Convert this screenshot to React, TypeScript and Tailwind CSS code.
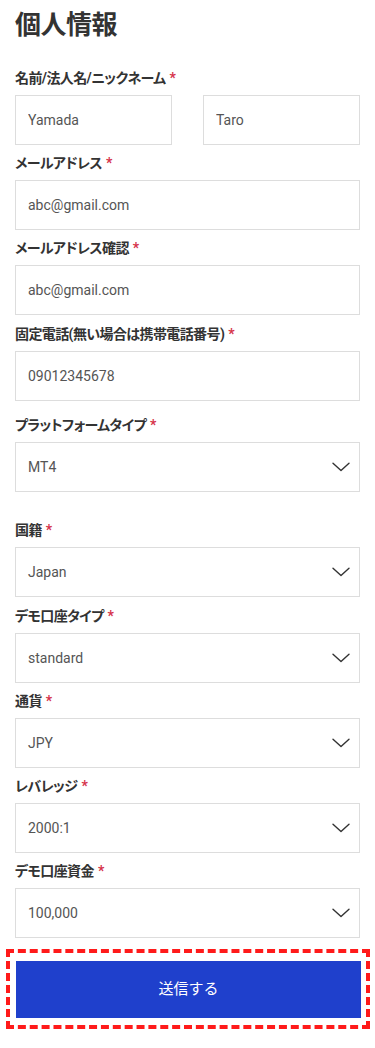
import React from "react";

const FONT = "font-['Roboto','Noto_Sans_CJK_JP',sans-serif]";

function Label({ text }: { text: string }) {
  return (
    <div className="h-5 mb-[7px] flex items-center text-[14px] leading-5 font-bold text-[#333] tracking-[-0.6px] [font-feature-settings:'palt']">
      <span>{text}</span>
      <span className="ml-1 text-[#d6324a]">*</span>
    </div>
  );
}

function TextBox({ value }: { value: string }) {
  return (
    <input
      readOnly
      value={value}
      className={`${FONT} block w-full h-[50px] border border-[#dddddd] bg-white px-3 text-[14px] text-[#555] outline-none`}
    />
  );
}

function Chevron() {
  return (
    <svg width="18" height="10" viewBox="0 0 18 10" fill="none" className="shrink-0">
      <path d="M1 1.2 L9 8.6 L17 1.2" stroke="#333" strokeWidth="1.4" strokeLinecap="round" strokeLinejoin="round" />
    </svg>
  );
}

function SelectBox({ value }: { value: string }) {
  return (
    <div className="flex items-center justify-between h-[50px] border border-[#dddddd] bg-white pl-3 pr-[9px] text-[14px] text-[#555]">
      <span>{value}</span>
      <Chevron />
    </div>
  );
}

function Field({ label, children, mt }: { label: string; children: React.ReactNode; mt: string }) {
  return (
    <div className={mt}>
      <Label text={label} />
      {children}
    </div>
  );
}

export default function App() {
  return (
    <div className={`${FONT} w-[375px] min-h-[1048px] bg-white px-[15px] pt-[8px]`}>
      <h1 className="text-[26px] leading-[34px] font-bold text-[#333] tracking-[-0.5px]">個人情報</h1>

      <Field label="名前/法人名/ニックネーム" mt="mt-[26px]">
        <div className="grid grid-cols-2 gap-[31px]">
          <TextBox value="Yamada" />
          <TextBox value="Taro" />
        </div>
      </Field>

      <Field label="メールアドレス" mt="mt-[8px]">
        <TextBox value="abc@gmail.com" />
      </Field>

      <Field label="メールアドレス確認" mt="mt-[8px]">
        <TextBox value="abc@gmail.com" />
      </Field>

      <Field label="固定電話(無い場合は携帯電話番号)" mt="mt-[9px]">
        <TextBox value="09012345678" />
      </Field>

      <Field label="プラットフォームタイプ" mt="mt-[14px]">
        <SelectBox value="MT4" />
      </Field>

      <Field label="国籍" mt="mt-[28px]">
        <SelectBox value="Japan" />
      </Field>

      <Field label="デモ口座タイプ" mt="mt-[9px]">
        <SelectBox value="standard" />
      </Field>

      <Field label="通貨" mt="mt-[8px]">
        <SelectBox value="JPY" />
      </Field>

      <Field label="レバレッジ" mt="mt-[8px]">
        <SelectBox value="2000:1" />
      </Field>

      <Field label="デモ口座資金" mt="mt-[8px]">
        <SelectBox value="100,000" />
      </Field>

      <div className="mt-[11px] -ml-[9px] -mr-[10px] border-4 border-dashed border-[#ff1a1a] pl-[6px] pr-[5px] pt-[8px] pb-[7px]">
        <button className="block w-full h-[57px] bg-[#1f40cc] text-white text-[15px] font-normal">
          送信する
        </button>
      </div>
    </div>
  );
}
